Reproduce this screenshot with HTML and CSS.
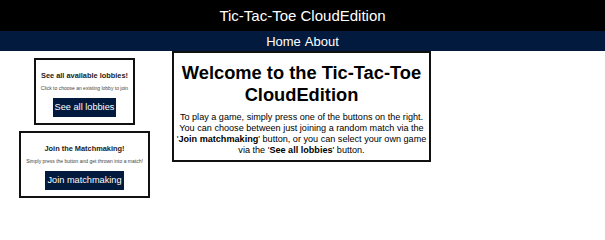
FILE: index.html
```html
<!DOCTYPE html>
<html lang="en">

<head>
  <title>Tic-Tac-Toe CloudEdition</title>
  <meta charset="UTF-8">
  <meta name="viewport" content="width=device-width, initial-scale=1.0">
  <link rel="stylesheet" href="styles.css">
</head>

<body>
  <header class="site-header">
    <h1 class="site-title">Tic-Tac-Toe CloudEdition</h1>
  </header>

  <nav class="site-nav">
    <a href="#">Home</a>
    <a href="#">About</a>
  </nav>

  <div class="page">
    <aside class="side-column">
      <div class="action-box">
        <h3>See all available lobbies!</h3>
        <p class="hint">Click to choose an existing lobby to join</p>
        <button class="action-button">See all lobbies</button>
      </div>

      <div class="action-box">
        <h3>Join the Matchmaking!</h3>
        <p class="hint">Simply press the button and get thrown into a match!</p>
        <button class="action-button">Join matchmaking</button>
      </div>
    </aside>

    <main class="welcome">
      <h2>Welcome to the Tic-Tac-Toe CloudEdition</h2>
      <p>
        To play a game, simply press one of the buttons on the right.
        You can choose between just joining a random match via the
        '<b>Join matchmaking</b>' button, or you can select your own game
        via the '<b>See all lobbies</b>' button.
      </p>
    </main>
  </div>
</body>

</html>
```

FILE: styles.css
```css
:root {
  --navy: #021a3d;
  --border-color: #111;
}

* {
  box-sizing: border-box;
  margin: 0;
  padding: 0;
  font-family: 'Liberation Sans', Arial, sans-serif;
}

body {
  background-color: #fff;
  color: #000;
}

.site-header {
  background-color: #000;
  height: 31px;
  display: flex;
  align-items: center;
  justify-content: center;
}

.site-title {
  color: #fff;
  font-size: 15px;
  font-weight: normal;
}

.site-nav {
  background-color: var(--navy);
  height: 20px;
  display: flex;
  align-items: center;
  justify-content: center;
  gap: 4px;
}

.site-nav a {
  color: #fff;
  text-decoration: none;
  font-size: 13px;
}

.page {
  display: grid;
  grid-template-columns: 169px 259px;
  column-gap: 3px;
  align-items: start;
}

.side-column {
  display: flex;
  flex-direction: column;
  align-items: center;
  gap: 6px;
  padding-top: 7px;
}

.action-box {
  border: 2px solid var(--border-color);
  text-align: center;
  padding: 11px 5px 6px 5px;
}

.action-box h3 {
  font-size: 7.4px;
  color: #222;
  line-height: 9px;
  margin-bottom: 5px;
}

.hint {
  font-size: 5px;
  color: #444;
  line-height: 6px;
  margin-bottom: 5px;
}

.action-button {
  background-color: var(--navy);
  color: #fff;
  border: none;
  font-size: 9.2px;
  padding: 4px 2px;
  line-height: 11px;
}

.welcome {
  border: 2px solid var(--border-color);
  text-align: center;
  padding: 9px 0 4px 0;
}

.welcome h2 {
  font-size: 18.3px;
  line-height: 22px;
  margin-bottom: 6px;
}

.welcome p {
  font-size: 9.1px;
  line-height: 11px;
}
```
